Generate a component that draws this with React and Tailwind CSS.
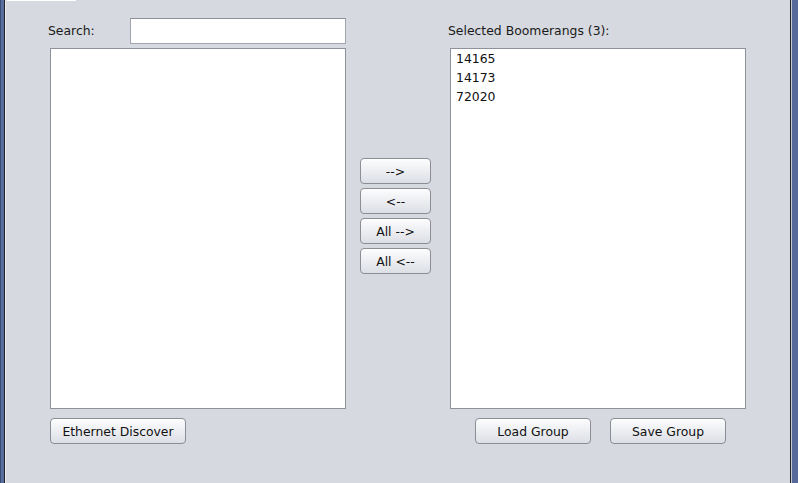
export default function App() {
  const btn =
    "h-[26px] flex items-center justify-center pt-[2px] rounded-[4px] border border-[#8b8e95] bg-gradient-to-b from-[#fdfdfe] to-[#dcdfe5] text-[12.4px] text-[#111] shadow-[inset_0_1px_0_#ffffff]";
  const items = ["14165", "14173", "72020"];

  return (
    <div
      className="w-[798px] h-[483px] flex bg-[#d6d9df] overflow-hidden"
      style={{ fontFamily: '"DejaVu Sans", Verdana, sans-serif' }}
    >
      {/* left window frame */}
      <div className="w-[1px] h-full bg-[#3a4e7c]" />
      <div className="w-[3px] h-full bg-[#5a6e9d]" />
      <div className="w-[1px] h-full bg-[#1f2129]" />
      <div className="w-[1px] h-full bg-[#eef0f4]" />

      <div className="flex-1 flex flex-col">
        <div className="h-[1px] flex">
          <div className="ml-[1px] w-[69px] bg-white" />
        </div>

        <div className="flex pt-[17px]">
          {/* left column */}
          <div className="ml-[42px] w-[298px] flex flex-col">
            <div className="h-[26px] flex items-center">
              <span className="text-[12.4px] text-[#1a1a1a]">Search:</span>
              <input
                type="text"
                className="ml-auto w-[216px] h-[26px] bg-white border border-[#a2a5ac] border-t-[#8e9199] outline-none px-1 text-[12px]"
              />
            </div>
            <div className="mt-[4px] ml-[2px] w-[296px] h-[361px] bg-white border border-[#8e929b]" />
            <div className="mt-[9px] ml-[2px]">
              <button className={`${btn} w-[136px]`}>Ethernet Discover</button>
            </div>
          </div>

          {/* middle buttons */}
          <div className="ml-[14px] w-[71px] mt-[140px] flex flex-col gap-[4px]">
            <button className={`${btn} w-[71px]`}>--&gt;</button>
            <button className={`${btn} w-[71px]`}>&lt;--</button>
            <button className={`${btn} w-[71px]`}>All --&gt;</button>
            <button className={`${btn} w-[71px]`}>All &lt;--</button>
          </div>

          {/* right column */}
          <div className="ml-[17px] w-[298px] flex flex-col">
            <div className="h-[26px] flex items-center">
              <span className="text-[12.4px] text-[#1a1a1a]">Selected Boomerangs (3):</span>
            </div>
            <div className="mt-[4px] ml-[2px] w-[296px] h-[361px] pt-[1px] bg-white border border-[#8e929b]">
              {items.map((it) => (
                <div key={it} className="h-[19px] px-[5px] flex items-center text-[12.4px] text-[#111]">
                  {it}
                </div>
              ))}
            </div>
            <div className="mt-[9px] ml-[27px] flex gap-[19px]">
              <button className={`${btn} w-[116px]`}>Load Group</button>
              <button className={`${btn} w-[116px]`}>Save Group</button>
            </div>
          </div>
        </div>
      </div>

      {/* right window frame */}
      <div className="w-[1px] h-full bg-[#1f2129]" />
      <div className="w-[1px] h-full bg-[#c9ccd3]" />
      <div className="w-[6px] h-full bg-[#56699a]" />
    </div>
  );
}
